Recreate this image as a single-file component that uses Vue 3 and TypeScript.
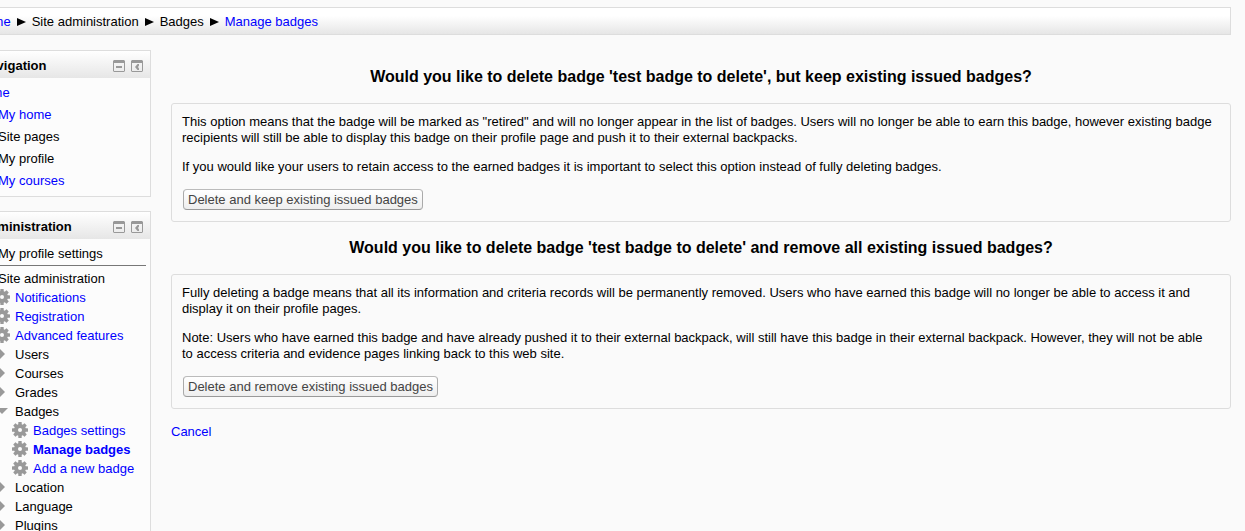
<script setup lang="ts">
interface NavItem {
  label: string
  link?: boolean
}

interface AdminItem {
  label: string
  icon: 'gear' | 'closed' | 'open'
  link?: boolean
  current?: boolean
  nested?: boolean
}

interface Choice {
  title: string
  paragraphs: string[]
  action: string
}

const crumbs: NavItem[] = [
  { label: 'Home', link: true },
  { label: 'Site administration' },
  { label: 'Badges' },
  { label: 'Manage badges', link: true },
]

const navigation: NavItem[] = [
  { label: 'My home', link: true },
  { label: 'Site pages' },
  { label: 'My profile' },
  { label: 'My courses', link: true },
]

const administration: AdminItem[] = [
  { label: 'Notifications', icon: 'gear', link: true },
  { label: 'Registration', icon: 'gear', link: true },
  { label: 'Advanced features', icon: 'gear', link: true },
  { label: 'Users', icon: 'closed' },
  { label: 'Courses', icon: 'closed' },
  { label: 'Grades', icon: 'closed' },
  { label: 'Badges', icon: 'open' },
  { label: 'Badges settings', icon: 'gear', link: true, nested: true },
  { label: 'Manage badges', icon: 'gear', link: true, current: true, nested: true },
  { label: 'Add a new badge', icon: 'gear', link: true, nested: true },
  { label: 'Location', icon: 'closed' },
  { label: 'Language', icon: 'closed' },
  { label: 'Plugins', icon: 'closed' },
]

const choices: Choice[] = [
  {
    title: "Would you like to delete badge 'test badge to delete', but keep existing issued badges?",
    paragraphs: [
      'This option means that the badge will be marked as "retired" and will no longer appear in the list of badges. Users will no longer be able to earn this badge, however existing badge recipients will still be able to display this badge on their profile page and push it to their external backpacks.',
      'If you would like your users to retain access to the earned badges it is important to select this option instead of fully deleting badges.',
    ],
    action: 'Delete and keep existing issued badges',
  },
  {
    title: "Would you like to delete badge 'test badge to delete' and remove all existing issued badges?",
    paragraphs: [
      'Fully deleting a badge means that all its information and criteria records will be permanently removed. Users who have earned this badge will no longer be able to access it and display it on their profile pages.',
      'Note: Users who have earned this badge and have already pushed it to their external backpack, will still have this badge in their external backpack. However, they will not be able to access criteria and evidence pages linking back to this web site.',
    ],
    action: 'Delete and remove existing issued badges',
  },
]

const blocks = ['Navigation', 'Administration']
</script>

<template>
  <div class="page">
    <nav class="breadcrumb" aria-label="Breadcrumb">
      <template v-for="(crumb, i) in crumbs" :key="crumb.label">
        <svg v-if="i > 0" class="separator" viewBox="0 0 9 8" width="9" height="8" aria-hidden="true">
          <path d="M0 0L9 4L0 8Z" />
        </svg>
        <a v-if="crumb.link" href="#">{{ crumb.label }}</a>
        <span v-else>{{ crumb.label }}</span>
      </template>
    </nav>

    <div class="columns">
      <aside class="sidebar">
        <section v-for="block in blocks" :key="block" class="block">
          <header class="block-header">
            <h2>{{ block }}</h2>
            <button type="button" :aria-label="`Hide ${block} block`">
              <svg viewBox="0 0 12 12" width="12" height="12">
                <path d="M1 0H11L12 1V11L11 12H1L0 11V1Z M1 3V11H11V3Z" fill="#999" fill-rule="evenodd" />
                <path d="M3 6H9V8H3Z" fill="#999" />
              </svg>
            </button>
            <button type="button" :aria-label="`Dock ${block} block`">
              <svg viewBox="0 0 12 12" width="12" height="12">
                <path d="M1 0H11L12 1V11L11 12H1L0 11V1Z M1 3V11H11V3Z" fill="#999" fill-rule="evenodd" />
                <path d="M8 4V5.500L7 7L8 8.500V10H6.500L4 7L6.500 4Z" fill="#999" />
              </svg>
            </button>
          </header>

          <ul v-if="block === 'Navigation'" class="nav-list">
            <li><a href="#">Home</a></li>
            <li v-for="item in navigation" :key="item.label" class="branch">
              <a v-if="item.link" href="#">{{ item.label }}</a>
              <span v-else>{{ item.label }}</span>
            </li>
          </ul>

          <div v-else class="admin">
            <p>My profile settings</p>
            <hr />
            <p>Site administration</p>
            <ul class="admin-list">
              <li v-for="item in administration" :key="item.label" :class="{ nested: item.nested }">
                <svg v-if="item.icon === 'gear'" class="icon" viewBox="0 0 16 16" width="16" height="16">
                  <g fill="#999">
                    <rect
                      v-for="angle in [0, 45, 90, 135]"
                      :key="angle"
                      x="6.300"
                      y="0"
                      width="3.400"
                      height="16"
                      rx="0.500"
                      :transform="`rotate(${angle} 8 8)`"
                    />
                    <circle cx="8" cy="8" r="6" />
                  </g>
                  <circle cx="8" cy="8" r="2" fill="#fcfcfc" />
                </svg>
                <svg v-else class="icon" viewBox="0 0 16 16" width="16" height="16">
                  <path v-if="item.icon === 'closed'" d="M5 2L11 8L5 14Z" fill="#999" />
                  <path v-else d="M2 5H14L8 11Z" fill="#999" />
                </svg>
                <a v-if="item.link" href="#" :class="{ current: item.current }">{{ item.label }}</a>
                <span v-else>{{ item.label }}</span>
              </li>
            </ul>
          </div>
        </section>
      </aside>

      <main class="content">
        <section v-for="choice in choices" :key="choice.action" class="choice">
          <h2>{{ choice.title }}</h2>
          <div class="box">
            <p v-for="text in choice.paragraphs" :key="text">{{ text }}</p>
            <button type="button" class="action">{{ choice.action }}</button>
          </div>
        </section>
        <a href="#">Cancel</a>
      </main>
    </div>
  </div>
</template>

<style>
html {
  overflow: hidden;
}

body {
  background: #fafafa;
}
</style>

<style scoped>
.page {
  margin-left: -30px;
  padding: 7px 14px 0 0;
  color: #000;
  font: 13px/16px Arial, 'Liberation Sans', sans-serif;
}

a {
  color: #00f;
  text-decoration: none;
}

h2,
p,
ul {
  margin: 0;
  padding: 0;
}

li {
  display: flex;
  align-items: center;
  white-space: nowrap;
}

.breadcrumb {
  display: flex;
  align-items: center;
  gap: 6px;
  padding: 6px 5px 4px;
  border: 1px solid #ddd;
  background: linear-gradient(#fff 30%, #e6e6e6);
}

.columns {
  display: flex;
  gap: 20px;
  margin-top: 15px;
}

.sidebar {
  flex: none;
  width: 181px;
}

.block {
  margin-bottom: 14px;
  border: 1px solid #ddd;
  background: #fcfcfc;
}

.block-header {
  display: flex;
  align-items: center;
  gap: 6px;
  padding: 7px 7px 4px 9px;
  background: linear-gradient(#fff, #e6e6e6);
}

.block-header h2 {
  flex: 1;
  font-size: 13px;
}

.block-header button {
  padding: 0;
  border: 0;
  background: none;
  line-height: 0;
}

.block-header svg {
  display: block;
}

.nav-list {
  padding: 4px;
}

.nav-list li {
  height: 22px;
}

.nav-list .branch {
  padding-left: 23px;
}

.admin {
  padding: 7px 4px 0;
}

.admin p {
  padding-left: 23px;
}

.admin hr {
  height: 1px;
  margin: 3px 0 5px;
  border: 0;
  background: #777;
}

.admin-list {
  padding-top: 1px;
}

.admin-list li {
  gap: 5px;
  height: 19px;
  padding-left: 19px;
}

.admin-list .nested {
  padding-left: 37px;
}

.icon {
  flex: none;
  margin-bottom: 2px;
}

.current {
  font-weight: bold;
}

.content {
  flex: 1;
  min-width: 0;
  padding-top: 16px;
}

.choice {
  margin-bottom: 15px;
}

.choice h2 {
  margin-bottom: 15px;
  font-size: 16px;
  line-height: 22px;
  text-align: center;
}

.box {
  padding: 10px 15px 10px 10px;
  border: 1px solid #ddd;
  border-radius: 3px;
}

.box p {
  margin-bottom: 13px;
}

.action {
  display: block;
  margin: 14px 1px 1px;
  padding: 1px 4px;
  border: 1px solid #aaa;
  border-color: #bbb #aaa #999;
  border-radius: 4px;
  background: linear-gradient(#fff, #eee);
  color: #444;
  font: inherit;
  line-height: 17px;
}
</style>
